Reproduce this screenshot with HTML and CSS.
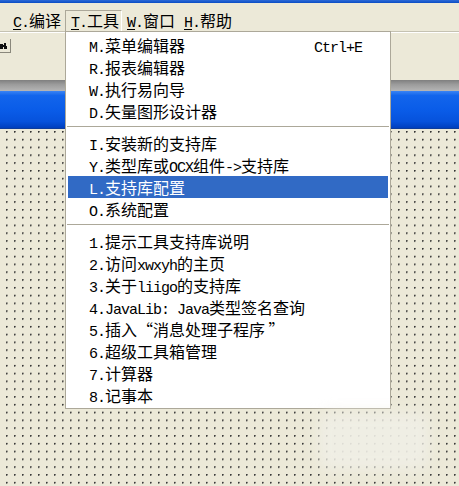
FILE: index.html
```html
<!DOCTYPE html>
<html lang="zh-CN">
<head>
<meta charset="utf-8">
<title>工具菜单</title>
<link rel="stylesheet" href="styles.css">
</head>
<body>
<div class="screen">
  <div class="titlebar"></div>
  <div class="menubar">
    <div class="mb-item"><span class="l"><u>C</u>.</span>编译</div>
    <div class="mb-item open"><span class="l"><u>T</u>.</span>工具</div>
    <div class="mb-item"><span class="l"><u>W</u>.</span>窗口</div>
    <div class="mb-item"><span class="l"><u>H</u>.</span>帮助</div>
  </div>
  <div class="toolbar">
    <div class="tb-btn">
      <svg width="7" height="6" viewBox="0 0 7 6"><path d="M0 1h3v1h1V0h2v3h1v3H4V4H3v2H0z" fill="#111"/></svg>
    </div>
  </div>
  <div class="band-gray"></div>
  <div class="band-blue"></div>
  <div class="canvas"></div>

  <div class="menu">
    <div class="item"><span class="txt"><span class="l">M.</span>菜单编辑器</span><span class="key"><span class="l">Ctrl+E</span></span></div>
    <div class="item"><span class="txt"><span class="l">R.</span>报表编辑器</span></div>
    <div class="item"><span class="txt"><span class="l">W.</span>执行易向导</span></div>
    <div class="item"><span class="txt"><span class="l">D.</span>矢量图形设计器</span></div>
    <div class="sep"></div>
    <div class="item"><span class="txt"><span class="l">I.</span>安装新的支持库</span></div>
    <div class="item"><span class="txt"><span class="l">Y.</span>类型库或<span class="l">OCX</span>组件<span class="l">-&gt;</span>支持库</span></div>
    <div class="item active"><span class="txt"><span class="l">L.</span>支持库配置</span></div>
    <div class="item"><span class="txt"><span class="l">O.</span>系统配置</span></div>
    <div class="sep"></div>
    <div class="item"><span class="txt"><span class="l">1.</span>提示工具支持库说明</span></div>
    <div class="item"><span class="txt"><span class="l">2.</span>访问<span class="l">xwxyh</span>的主页</span></div>
    <div class="item"><span class="txt"><span class="l">3.</span>关于<span class="l">liigo</span>的支持库</span></div>
    <div class="item"><span class="txt"><span class="l">4.JavaLib: Java</span>类型签名查询</span></div>
    <div class="item"><span class="txt"><span class="l">5.</span>插入“消息处理子程序 ”</span></div>
    <div class="item"><span class="txt"><span class="l">6.</span>超级工具箱管理</span></div>
    <div class="item"><span class="txt"><span class="l">7.</span>计算器</span></div>
    <div class="item"><span class="txt"><span class="l">8.</span>记事本</span></div>
  </div>

  <div class="watermark"></div>
</div>
</body>
</html>
```

FILE: styles.css
```css
html, body {
  margin: 0;
  padding: 0;
}

body {
  background: #ece9d8;
  font-family: "Noto Sans CJK SC", "Liberation Mono", sans-serif;
  font-size: 16px;
  color: #000;
}

.screen {
  position: relative;
  width: 459px;
  height: 486px;
  overflow: hidden;
  display: flex;
  flex-direction: column;
}

.l {
  font-family: "Liberation Mono", "Noto Sans CJK SC", monospace;
  font-size: 15px;
  letter-spacing: -1px;
}

.titlebar {
  height: 3px;
  background: linear-gradient(#2d6bd8, #0a4cc4);
  flex: none;
}

.menubar {
  height: 28px;
  flex: none;
  display: flex;
  align-items: flex-end;
  padding-left: 8px;
  background: #ece9d8;
}

.mb-item {
  box-sizing: border-box;
  width: 57px;
  height: 21px;
  padding-left: 5px;
  line-height: 20px;
  white-space: nowrap;
}

.mb-item u {
  text-decoration: underline;
  text-underline-offset: 2px;
}

.mb-item.open {
  border-left: 1px solid #aca899;
  border-top: 1px solid #aca899;
  border-right: 1px solid #fff;
  line-height: 19px;
}

.toolbar {
  height: 49px;
  flex: none;
  box-sizing: border-box;
  border-top: 1px solid #c5c2b2;
  box-shadow: inset 0 1px #fff;
  background: #ece9d8;
}

.tb-btn {
  box-sizing: border-box;
  width: 11px;
  height: 14px;
  margin-top: 7px;
  border-right: 1px solid #8a887c;
  border-bottom: 1px solid #8a887c;
  display: flex;
  align-items: center;
}

.band-gray {
  height: 11px;
  flex: none;
  background: linear-gradient(#7f7f7f, #9b9b9b 40%, #b5b5b5);
}

.band-blue {
  height: 38px;
  flex: none;
  background: linear-gradient(#3a84f4 0%, #1265ec 12%, #0a5ce8 50%, #0652dc 80%, #0040c0 96%, #123a8a 100%);
}

.canvas {
  flex: 1;
  background-color: #ece9d8;
  background-image: radial-gradient(circle at 0.8px 0.8px, #333 0.6px, rgba(0,0,0,0) 1.1px);
  background-size: 8px 7.8px;
  background-position: 6px 2px;
}

.menu {
  position: absolute;
  left: 65px;
  top: 31px;
  width: 326px;
  box-sizing: border-box;
  background: #fff;
  border: 1px solid #aca899;
  padding: 2px;
}

.item {
  height: 22px;
  line-height: 22px;
  padding-left: 21px;
  padding-right: 26px;
  display: flex;
  align-items: baseline;
  white-space: nowrap;
}

.item.active {
  background: #316ac5;
  color: #fff;
}

.key {
  margin-left: auto;
}

.sep {
  height: 10px;
  position: relative;
}

.sep::after {
  content: "";
  position: absolute;
  left: -1px;
  right: -1px;
  top: 4px;
  height: 1px;
  background: #aca899;
}

.watermark {
  position: absolute;
  left: 318px;
  top: 412px;
  width: 112px;
  height: 58px;
  background: rgba(240, 238, 230, 0.9);
  border-radius: 14px;
  filter: blur(7px);
}
```
